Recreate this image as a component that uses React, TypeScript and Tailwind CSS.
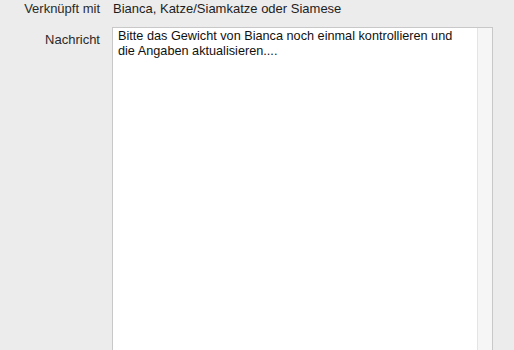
export default function App() {
    return (
        <div className="w-[514px] h-[350px] overflow-hidden bg-[#ececec] text-[13px] text-[#1d1d1d] font-['Liberation_Sans',Arial,sans-serif]">
            <div className="flex items-center h-[17px]">
                <div className="w-[100px] text-right text-[#2a2a2a]">Verknüpft mit</div>
                <div className="ml-[13px]">Bianca, Katze/Siamkatze oder Siamese</div>
            </div>
            <div className="flex mt-[10px]">
                <div className="w-[100px] text-right text-[#2a2a2a] pt-[3px]">Nachricht</div>
                <div className="ml-[12px] w-[381px] h-[340px] bg-white border border-[#c8c8c8] flex">
                    <div className="flex-1 pl-[5px] pt-[1px] text-[12.7px] leading-[15px] text-[#111]">
                        Bitte das Gewicht von Bianca noch einmal kontrollieren und
                        <br />
                        die Angaben aktualisieren....
                    </div>
                    <div className="w-[15px] bg-[#f6f6f6] border-l border-[#e4e4e4]" />
                </div>
            </div>
        </div>
    )
}
